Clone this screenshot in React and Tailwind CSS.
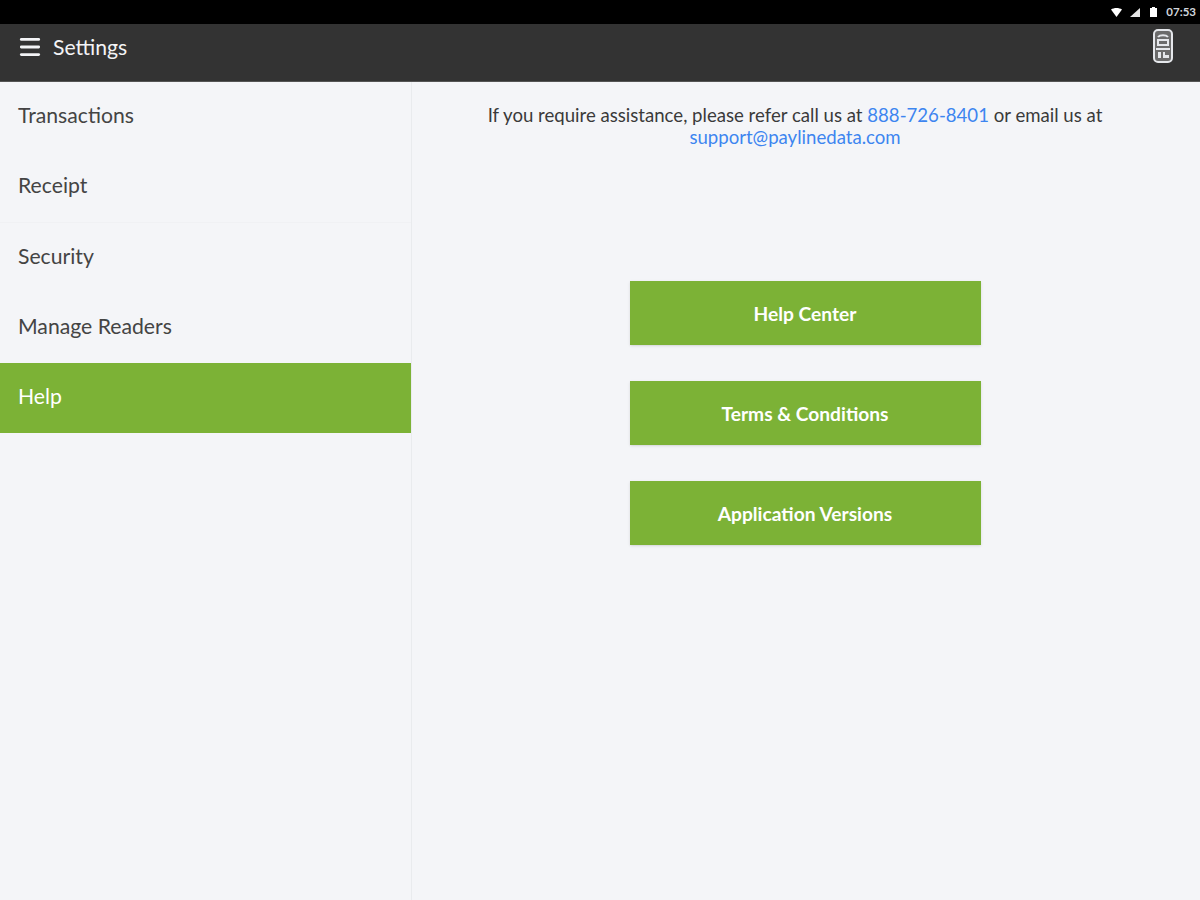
import { Menu } from "lucide-react";

const items = ["Transactions", "Receipt", "Security", "Manage Readers", "Help"];
const buttons = ["Help Center", "Terms & Conditions", "Application Versions"];

function StatusBar() {
  return (
    <div className="h-6 bg-black flex items-center justify-end pr-1 text-white">
      {/* wifi */}
      <svg width="11" height="9" viewBox="0 0 11 9" fill="currentColor" className="mr-2">
        <path d="M0 1.5 C3 -0.5 8 -0.5 11 1.5 L5.5 9 Z" />
      </svg>
      {/* signal */}
      <svg width="10" height="9" viewBox="0 0 10 9" fill="currentColor" className="mr-[10px]">
        <path d="M0 9 L10 0 V9 Z" opacity="0.9" />
      </svg>
      {/* battery */}
      <svg width="7" height="10" viewBox="0 0 7 10" fill="currentColor" className="mr-[9px]">
        <path d="M2 0 H5 V1 H7 V10 H0 V1 H2 Z" />
      </svg>
      <span className="text-[11.5px] font-bold text-gray-300 leading-none">07:53</span>
    </div>
  );
}

function ReaderIcon() {
  return (
    <svg width="20" height="34" viewBox="0 0 20 34" fill="none" className="text-gray-200 mb-1">
      <rect x="1" y="1" width="18" height="32" rx="4" stroke="currentColor" strokeWidth="2" fill="#6b6b6b" />
      <path d="M5 8 C7 5.5 13 5.5 15 8" stroke="currentColor" strokeWidth="2" />
      <rect x="5" y="11" width="10" height="5" stroke="currentColor" strokeWidth="2" />
      <path d="M3 20 H17" stroke="currentColor" strokeWidth="2" />
      <rect x="5" y="23" width="3" height="6" fill="currentColor" />
      <path d="M10 23 H12 V26 H16 V29 H10 Z" fill="currentColor" />
    </svg>
  );
}

export default function App() {
  return (
    <div className="h-[900px] flex flex-col bg-[#f4f5f8] font-['Lato',sans-serif] overflow-hidden">
      <StatusBar />
      <header className="h-[58px] bg-[#333333] flex items-center justify-between pl-[17px] pr-[27px] pb-2.5 border-b border-[#555555]">
        <div className="flex items-center gap-[10px]">
          <Menu size={26} strokeWidth={2.6} className="text-gray-100" />
          <span className="text-[21.2px] text-gray-100">Settings</span>
        </div>
        <ReaderIcon />
      </header>
      <div className="flex-1 flex">
        {/* Sidebar */}
        <nav className="w-[412px] border-r border-[#e9ebee]">
          {items.map((item) => (
            <div
              key={item}
              className={
                item === "Help"
                  ? "h-[70.3px] flex items-center pl-[18px] pb-0.5 text-[21.2px] bg-[#7cb236] text-white"
                  : item === "Receipt"
                    ? "h-[70.3px] flex items-center pl-[18px] pb-0.5 text-[21.2px] text-[#444444] border-b border-[#f0f1f4]"
                    : "h-[70.3px] flex items-center pl-[18px] pb-0.5 text-[21.2px] text-[#444444]"
              }
            >
              {item}
            </div>
          ))}
        </nav>
        {/* Help panel */}
        <main className="flex-1 flex flex-col items-center">
          <p className="w-[640px] mr-[22px] mt-[22px] text-center text-[18.6px] leading-[22px] text-[#3a3a3a]">
            If you require assistance, please refer call us at{" "}
            <span className="text-[#3d85f0]">888-726-8401</span> or email us at{" "}
            <span className="text-[#3d85f0]">support@paylinedata.com</span>
          </p>
          <div className="mt-[133px] mr-[2px] flex flex-col gap-9">
            {buttons.map((label) => (
              <button
                key={label}
                className="w-[351px] h-16 pt-0.5 bg-[#7cb236] text-white text-[19.2px] font-bold shadow-sm"
              >
                {label}
              </button>
            ))}
          </div>
        </main>
      </div>
    </div>
  );
}
